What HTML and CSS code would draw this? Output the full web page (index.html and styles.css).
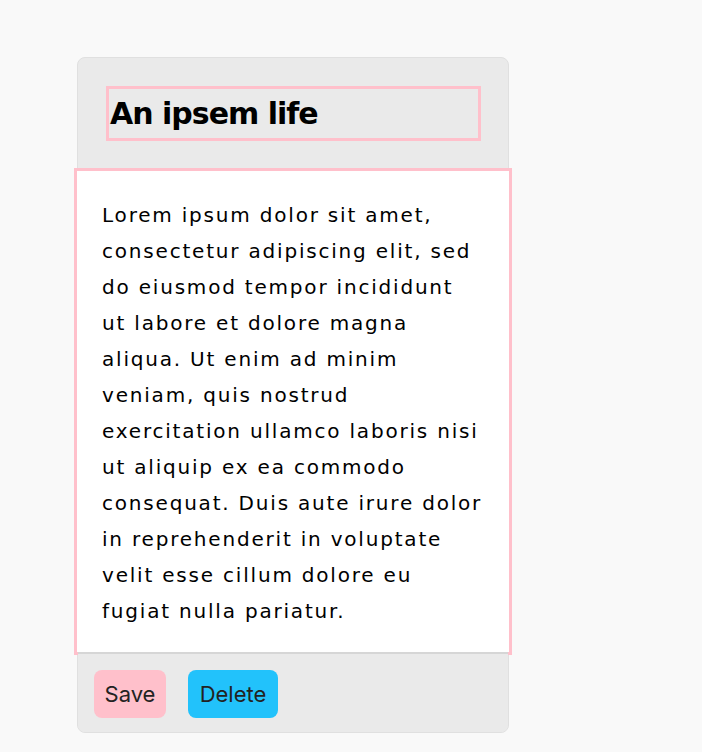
FILE: index.html
```html
<!DOCTYPE html>
<html>
<head>
<meta charset="utf-8">
<link rel="stylesheet" href="styles.css">
</head>
<body>
<div class="page">
  <div class="card">
    <div class="card-header">
      <div class="title-box"><h1 class="title">An ipsem life</h1></div>
    </div>
    <div class="card-body">
      <p class="text">Lorem ipsum dolor sit amet,<br>
consectetur adipiscing elit, sed<br>
do eiusmod tempor incididunt<br>
ut labore et dolore magna<br>
aliqua. Ut enim ad minim<br>
veniam, quis nostrud<br>
exercitation ullamco laboris nisi<br>
ut aliquip ex ea commodo<br>
consequat. Duis aute irure dolor<br>
in reprehenderit in voluptate<br>
velit esse cillum dolore eu<br>
fugiat nulla pariatur.</p>
    </div>
    <div class="card-footer">
      <button class="btn btn-save">Save</button>
      <button class="btn btn-delete">Delete</button>
    </div>
  </div>
</div>
</body>
</html>
```
FILE: styles.css
```css
html, body {
  margin: 0;
  padding: 0;
  background: #f9f9f9;
}
.page {
  padding: 57px 0 0 77px;
}
.card {
  width: 432px;
  box-sizing: border-box;
  background: #eaeaea;
  border: 1px solid #e0e0e0;
  border-radius: 8px;
}
.card-header {
  padding: 28px 27px 27px 28px;
}
.title-box {
  border: 3px solid #ffc0cb;
  height: 49px;
  display: flex;
  align-items: center;
}
.title {
  margin: 0;
  padding-left: 1px;
  font-family: "DejaVu Sans", sans-serif;
  font-weight: 700;
  font-size: 30px;
  letter-spacing: -1px;
  color: #000;
}
.card-body {
  margin: 0 -4px;
  background: #fff;
  border: 3px solid #ffc0cb;
  padding: 26px 24px 23px 25px;
}
.text {
  margin: 0;
  font-family: "DejaVu Sans", sans-serif;
  font-size: 20px;
  letter-spacing: 1.8px;
  line-height: 36px;
  white-space: nowrap;
  color: #000;
}
.card-footer {
  margin-top: -3px;
  background: #eaeaea;
  border-top: 2px solid #d6d6d6;
  border-radius: 0 0 7px 7px;
  padding: 16px 16px 14px 16px;
  display: flex;
  gap: 22px;
}
.btn {
  height: 48px;
  border: none;
  border-radius: 8px;
  padding: 0;
  font-family: Inter, "Liberation Sans", sans-serif;
  font-size: 22px;
  color: #222;
}
.btn-save {
  background: #ffc0cb;
  width: 72px;
}
.btn-delete {
  background: #22c2fb;
  width: 90px;
}
```
